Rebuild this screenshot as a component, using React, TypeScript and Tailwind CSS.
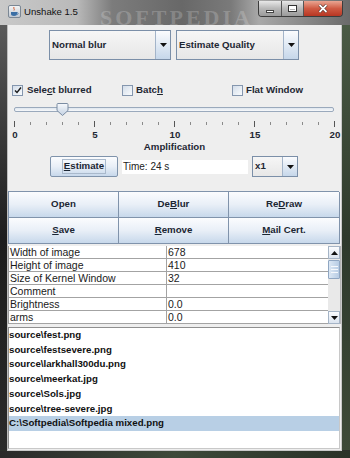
import React from "react";

const F = "font-['Liberation_Sans',Arial,sans-serif]";

function Down() {
  return (
    <svg width="7" height="4" viewBox="0 0 7 4">
      <path d="M0 0H7L3.5 4Z" fill="#111" />
    </svg>
  );
}
function Up() {
  return (
    <svg width="7" height="4" viewBox="0 0 7 4">
      <path d="M0 4H7L3.5 0Z" fill="#111" />
    </svg>
  );
}

function Combo({ className, label }: { className: string; label: string }) {
  return (
    <div className={`flex border border-[#7b8fa8] bg-gradient-to-b from-[#f6f6f6] to-[#e7e7e7] ${className}`}>
      <div className="flex-1 flex items-center pl-[2px] font-bold text-[9.7px] text-[#1e2733] whitespace-nowrap">{label}</div>
      <div className="w-[15px] border-l border-[#a3b4c9] bg-gradient-to-b from-[#fbfcfe] to-[#c6d7ea] flex items-center justify-center">
        <Down />
      </div>
    </div>
  );
}

function Check({ checked }: { checked?: boolean }) {
  return (
    <div className="w-[11px] h-[11px] border border-[#8496ae] bg-gradient-to-br from-[#d3dde9] to-[#f9fbfd] flex items-center justify-center">
      {checked && (
        <svg width="8" height="8" viewBox="0 0 8 8">
          <path d="M1 4.5L3 6.5L7 1.5" stroke="#1a1a1a" strokeWidth="1.4" fill="none" />
        </svg>
      )}
    </div>
  );
}

function Btn({ children }: { children: React.ReactNode }) {
  return (
    <div className="h-[26px] border-r border-b border-[#8093ab] bg-gradient-to-b from-[#fbfcfe] via-[#e9eff7] to-[#c7d8eb] flex items-center justify-center font-bold text-[9.7px] text-[#1b2633]">
      {children}
    </div>
  );
}

const rows: [string, string][] = [
  ["Width of image", "678"],
  ["Height of image", "410"],
  ["Size of Kernel Window", "32"],
  ["Comment", ""],
  ["Brightness", "0.0"],
  ["arms", "0.0"],
];

const files = [
  "source\\fest.png",
  "source\\festsevere.png",
  "source\\larkhall300du.png",
  "source\\meerkat.jpg",
  "source\\Sols.jpg",
  "source\\tree-severe.jpg",
  "C:\\Softpedia\\Softpedia mixed.png",
];

export default function App() {
  const ticks = Array.from({ length: 21 }, (_, i) => i);
  return (
    <div className={`${F} w-[350px] h-[458px] overflow-hidden flex flex-col bg-[#2c302b]`}>
      {/* title bar */}
      <div className="relative h-[25px] flex items-start bg-[linear-gradient(90deg,#c9c9c9_0%,#b9b9b9_22%,#7c7c7c_32%,#686868_52%,#7a7a7a_66%,#a9a9a9_74%,#9a9a9a_80%,#6a6a6a_100%)]">
        <div className="absolute left-[100px] top-[1px] text-[22px] font-bold tracking-[3px] text-white/20 font-['Liberation_Serif',serif] select-none">SOFTPEDIA</div>
        <div className="ml-[8px] mt-[5px] w-[13px] h-[13px] rounded-[2px] bg-gradient-to-b from-[#f4f4f4] to-[#bfc7d2] border border-[#7b8794] flex items-end justify-center">
          <svg width="11" height="11" viewBox="0 0 11 11">
            <path d="M5 1C4 2.5 6 3 5 4.5" stroke="#d4572a" strokeWidth="1" fill="none" />
            <path d="M2 6H8V8C8 9 7 10 5 10C3 10 2 9 2 8Z" fill="#3a6ea5" />
            <path d="M8 6.5C9.5 6.5 9.5 8.5 8 8.5" stroke="#3a6ea5" strokeWidth="0.8" fill="none" />
          </svg>
        </div>
        <div className="relative ml-[3px] mt-[6px] text-[9.6px] leading-[12px] text-[#111]">Unshake 1.5</div>
        <div className="relative ml-auto mr-[7px] mt-[1px] flex h-[16px] rounded-b-[4px] overflow-hidden border border-[#3c3c3c] border-t-0">
          <div className="w-[23px] border-r border-[#555] bg-gradient-to-b from-[#e8e8e8] via-[#b8b8b8] to-[#9a9a9a] flex items-center justify-center">
            <div className="mt-[5px] w-[8px] h-[3px] bg-white border border-[#444]" />
          </div>
          <div className="w-[22px] border-r border-[#555] bg-gradient-to-b from-[#e8e8e8] via-[#b8b8b8] to-[#9a9a9a] flex items-center justify-center">
            <div className="w-[9px] h-[7px] border border-[#333] bg-transparent shadow-[inset_0_0_0_1px_#fff,inset_0_2px_0_1px_#fff]" />
          </div>
          <div className="w-[38px] bg-gradient-to-b from-[#e9a592] via-[#cf5a43] to-[#b73522] flex items-center justify-center">
            <svg width="10" height="9" viewBox="0 0 10 9">
              <path d="M1.5 1L8.5 8M8.5 1L1.5 8" stroke="#3a1a14" strokeWidth="3" />
              <path d="M1.5 1L8.5 8M8.5 1L1.5 8" stroke="#fff" strokeWidth="1.8" />
            </svg>
          </div>
        </div>
      </div>

      <div className="flex h-[425px]">
        {/* left frame */}
        <div className="w-[8px] flex">
          <div className="w-[7px] bg-gradient-to-b from-[#5a5a5a] via-[#1d1d1d] to-[#2a2a2a]" />
          <div className="w-[1px] bg-[#bdbdbd]" />
        </div>

        {/* content */}
        <div className="relative w-[333px] bg-[#eeeeee] flex flex-col">
          {/* combos */}
          <div className="pt-[5px] pl-[41px] flex gap-[5px]">
            <Combo className="w-[122px] h-[30px]" label="Normal blur" />
            <Combo className="w-[123px] h-[30px]" label="Estimate Quality" />
          </div>

          {/* checkboxes */}
          <div className="mt-[23px] h-[12px] pl-[4px] grid grid-cols-[110px_110px_auto] items-center font-bold text-[9.7px] text-[#1e2733]">
            <div className="flex items-center gap-[4px]">
              <Check checked />
              <span>
                Sele<span className="underline">c</span>t blurred
              </span>
            </div>
            <div className="flex items-center gap-[3px]">
              <Check />
              <span>
                Batc<span className="underline">h</span>
              </span>
            </div>
            <div className="flex items-center gap-[3px]">
              <Check />
              <span>Flat Window</span>
            </div>
          </div>

          {/* slider */}
          <div className="mt-[7px] ml-[6px] w-[320px] h-[15px] relative">
            <div className="mt-[5px] h-[5px] rounded-[2px] border border-[#9aa9bc] bg-gradient-to-b from-[#dfe6ee] to-[#f7f9fb]" />
            <svg className="absolute left-[42px] top-[1px]" width="13" height="13" viewBox="0 0 13 13">
              <defs>
                <linearGradient id="th" x1="0" y1="0" x2="0" y2="1">
                  <stop offset="0" stopColor="#f7f9fc" />
                  <stop offset="1" stopColor="#c3d1e2" />
                </linearGradient>
              </defs>
              <path d="M1 1.5Q1 0.5 2 0.5H11Q12 0.5 12 1.5V7.5L6.5 12.5L1 7.5Z" fill="url(#th)" stroke="#7b8ca2" />
            </svg>
          </div>

          {/* ticks */}
          <svg className="mt-[4px]" width="333" height="6" viewBox="0 0 333 6">
            {ticks.map((i) => (
              <line
                key={i}
                x1={6.5 + i * 16}
                x2={6.5 + i * 16}
                y1={i % 5 === 0 ? 0 : 1}
                y2={i % 5 === 0 ? 6 : 4}
                stroke={i % 5 === 0 ? "#555" : "#8a8a8a"}
                strokeWidth="1"
              />
            ))}
          </svg>

          {/* labels */}
          <div className="mt-[2px] ml-[7px] w-[320px] h-[11px] flex justify-between font-bold text-[9.7px] leading-[11px] text-[#1e2733]">
            {["0", "5", "10", "15", "20"].map((l) => (
              <div key={l} className="w-0 flex justify-center whitespace-nowrap">
                {l}
              </div>
            ))}
          </div>

          <div className="mt-[1px] h-[11px] text-center font-bold text-[9.7px] leading-[11px] text-[#1e2733]">Amplification</div>

          {/* estimate row */}
          <div className="mt-[4px] h-[21px] pl-[42px] flex items-center gap-[4px]">
            <div className="w-[68px] h-[21px] rounded-[2px] border border-[#7f93ab] bg-gradient-to-b from-[#fbfcfe] via-[#e9eff7] to-[#c7d8eb] flex items-center justify-center">
              <div className="border border-[#a9b9cc] px-[1px] h-[15px] flex items-center font-bold text-[9.7px] text-[#1b2633]">
                <span className="underline">E</span>stimate
              </div>
            </div>
            <div className="w-[126px] h-[14px] bg-white pl-[1px] flex items-center text-[10px] text-[#222]">Time: 24 s</div>
            <Combo className="w-[46px] h-[21px]" label="x1" />
          </div>

          {/* buttons */}
          <div className="mt-[14px] w-[331px] grid grid-cols-[110px_110px_111px] border-t border-l border-[#8093ab]">
            <Btn>Open</Btn>
            <Btn>
              De<span className="underline">B</span>lur
            </Btn>
            <Btn>
              Re<span className="underline">D</span>raw
            </Btn>
            <Btn>
              <span className="underline">S</span>ave
            </Btn>
            <Btn>
              <span className="underline">R</span>emove
            </Btn>
            <Btn>
              <span className="underline">M</span>ail Cert.
            </Btn>
          </div>

          {/* table */}
          <div className="mt-[2px] flex w-[333px]">
            <div className="w-[320px] bg-white border-l border-[#9c9c9c]">
              {rows.map(([k, v]) => (
                <div key={k} className="h-[13px] grid grid-cols-[158px_162px] border-b border-[#a3a3a3] text-[10.5px] leading-[12px] text-[#1a1a1a]">
                  <div className="pl-[1px] border-r border-[#a3a3a3] whitespace-nowrap overflow-hidden">{k}</div>
                  <div className="pl-[1px] whitespace-nowrap">{v}</div>
                </div>
              ))}
            </div>
            <div className="w-[13px] h-[78px] flex flex-col bg-[#e9e9e9] border-r border-[#b5b5b5]">
              <div className="h-[13px] border border-[#a5b4c6] bg-gradient-to-b from-[#fbfcfe] to-[#dbe4ef] flex items-center justify-center">
                <Up />
              </div>
              <div className="mt-[1px] h-[19px] border border-[#8fa6c2] rounded-[1px] bg-gradient-to-r from-[#dbe7f4] to-[#b7cce4] flex flex-col items-center justify-center gap-[2px]">
                <div className="w-[7px] h-[1px] bg-[#f5f8fc]" />
                <div className="w-[7px] h-[1px] bg-[#f5f8fc]" />
                <div className="w-[7px] h-[1px] bg-[#f5f8fc]" />
              </div>
              <div className="flex-1" />
              <div className="h-[13px] border border-[#a5b4c6] bg-gradient-to-b from-[#fbfcfe] to-[#dbe4ef] flex items-center justify-center">
                <Down />
              </div>
            </div>
          </div>

          {/* file list */}
          <div className="mt-[3px] w-[332px] h-[122px] bg-white border border-[#8f8f8f] border-r-[#c8c8c8] border-b-[#c8c8c8]">
            {files.map((f, i) => (
              <div
                key={f}
                className={`h-[14.7px] flex items-center font-bold text-[9.7px] text-[#111] whitespace-nowrap ${i === 6 ? "bg-[#b8cfe5]" : ""}`}
              >
                {f}
              </div>
            ))}
          </div>
        </div>

        {/* right frame */}
        <div className="w-[9px] flex">
          <div className="w-[1px] bg-[#c9c9c9]" />
          <div className="flex-1 bg-gradient-to-b from-[#4a5a45] via-[#2f3a2c] to-[#3d4a38]" />
        </div>
      </div>

      {/* bottom frame */}
      <div className="h-[8px] flex flex-col">
        <div className="h-[1px] ml-[7px] mr-[8px] bg-[#c9c9c9]" />
        <div className="flex-1 bg-gradient-to-r from-[#2a2a2a] via-[#3e4a3a] to-[#2a3228]" />
      </div>
    </div>
  );
}
